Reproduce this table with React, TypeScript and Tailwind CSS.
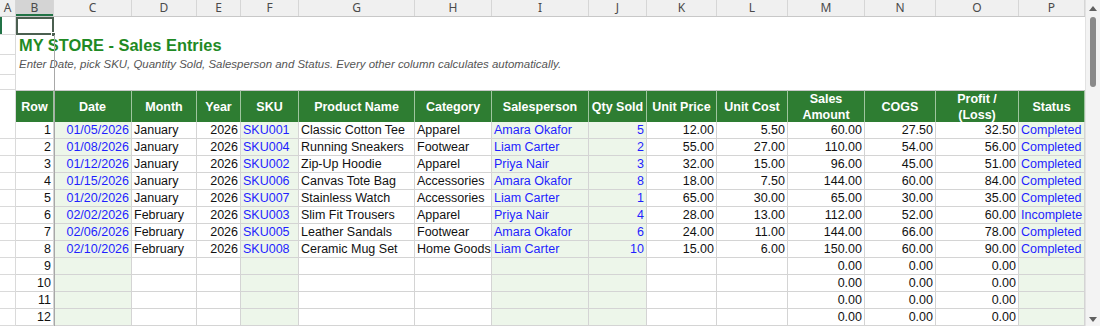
import React from "react";

type Col = { w: number; align: "left" | "right"; input?: boolean };

const COLS: Col[] = [
  { w: 38, align: "right" },
  { w: 78, align: "right", input: true },
  { w: 65, align: "left" },
  { w: 44, align: "right" },
  { w: 58, align: "left", input: true },
  { w: 116, align: "left" },
  { w: 77, align: "left" },
  { w: 97, align: "left", input: true },
  { w: 58, align: "right", input: true },
  { w: 70, align: "right" },
  { w: 71, align: "right" },
  { w: 77, align: "right" },
  { w: 71, align: "right" },
  { w: 83, align: "right" },
  { w: 66, align: "left", input: true },
];

const GRID =
  "grid grid-cols-[16px_38px_78px_65px_44px_58px_116px_77px_97px_58px_70px_71px_77px_71px_83px_66px]";

const LETTERS = ["A", "B", "C", "D", "E", "F", "G", "H", "I", "J", "K", "L", "M", "N", "O", "P"];

const HEADERS: React.ReactNode[] = [
  "Row",
  "Date",
  "Month",
  "Year",
  "SKU",
  "Product Name",
  "Category",
  "Salesperson",
  "Qty Sold",
  "Unit Price",
  "Unit Cost",
  <>
    Sales
    <br />
    Amount
  </>,
  "COGS",
  <>
    Profit /
    <br />
    (Loss)
  </>,
  "Status",
];

const DATA: string[][] = [
  ["1", "01/05/2026", "January", "2026", "SKU001", "Classic Cotton Tee", "Apparel", "Amara Okafor", "5", "12.00", "5.50", "60.00", "27.50", "32.50", "Completed"],
  ["2", "01/08/2026", "January", "2026", "SKU004", "Running Sneakers", "Footwear", "Liam Carter", "2", "55.00", "27.00", "110.00", "54.00", "56.00", "Completed"],
  ["3", "01/12/2026", "January", "2026", "SKU002", "Zip-Up Hoodie", "Apparel", "Priya Nair", "3", "32.00", "15.00", "96.00", "45.00", "51.00", "Completed"],
  ["4", "01/15/2026", "January", "2026", "SKU006", "Canvas Tote Bag", "Accessories", "Amara Okafor", "8", "18.00", "7.50", "144.00", "60.00", "84.00", "Completed"],
  ["5", "01/20/2026", "January", "2026", "SKU007", "Stainless Watch", "Accessories", "Liam Carter", "1", "65.00", "30.00", "65.00", "30.00", "35.00", "Completed"],
  ["6", "02/02/2026", "February", "2026", "SKU003", "Slim Fit Trousers", "Apparel", "Priya Nair", "4", "28.00", "13.00", "112.00", "52.00", "60.00", "Incomplete"],
  ["7", "02/06/2026", "February", "2026", "SKU005", "Leather Sandals", "Footwear", "Amara Okafor", "6", "24.00", "11.00", "144.00", "66.00", "78.00", "Completed"],
  ["8", "02/10/2026", "February", "2026", "SKU008", "Ceramic Mug Set", "Home Goods", "Liam Carter", "10", "15.00", "6.00", "150.00", "60.00", "90.00", "Completed"],
  ["9", "", "", "", "", "", "", "", "", "", "", "0.00", "0.00", "0.00", ""],
  ["10", "", "", "", "", "", "", "", "", "", "", "0.00", "0.00", "0.00", ""],
  ["11", "", "", "", "", "", "", "", "", "", "", "0.00", "0.00", "0.00", ""],
  ["12", "", "", "", "", "", "", "", "", "", "", "0.00", "0.00", "0.00", ""],
];

function ColA({ h, selected }: { h: string; selected?: boolean }) {
  return (
    <div className={`${h} border-b border-r border-[#dadada] bg-white flex`}>
      <div className={`w-[2px] h-full ${selected ? "bg-[#217346]" : "bg-transparent"}`} />
    </div>
  );
}

export default function App() {
  return (
    <div
      className="w-[1100px] h-[326px] overflow-hidden flex bg-white text-black"
      style={{ fontFamily: '"Liberation Sans", Arial, sans-serif' }}
    >
      <div className="relative w-[1085px] h-full flex flex-col">
        {/* column letters */}
        <div className={`${GRID} h-[17px] bg-[#f0f0f0] border-b border-[#c8c8c8]`}>
          {LETTERS.map((l) => (
            <div
              key={l}
              className={`flex items-center justify-center border-r border-[#d6d6d6] text-[12px] leading-none text-[#4a4a4a] ${
                l === "B" ? "bg-[#d4d4d4] shadow-[inset_0_-2px_0_#217346]" : ""
              }`}
              style={{ fontFamily: '"Noto Sans", "Open Sans", sans-serif' }}
            >
              {l}
            </div>
          ))}
        </div>

        {/* row 1 with selected cell */}
        <div className="flex h-[18px]">
          <ColA h="h-[18px] w-[16px]" selected />
          <div className="relative w-[38px] h-[18px] border-2 border-[#4b5f50]">
            <div className="absolute -right-[4px] -bottom-[4px] w-[5px] h-[5px] bg-[#4b5f50] border border-white" />
          </div>
          <div className="flex-1" />
        </div>

        {/* title */}
        <div className="flex h-[20px]">
          <ColA h="h-[20px] w-[16px]" />
          <div className="flex-1 flex items-center pl-[3px] pt-[1px] text-[16.4px] font-bold text-[#1f8a24] whitespace-nowrap">
            MY STORE - Sales Entries
          </div>
        </div>

        {/* subtitle */}
        <div className="flex h-[20px]">
          <ColA h="h-[20px] w-[16px]" />
          <div className="flex-1 flex items-center pl-[3px] text-[11.45px] italic text-[#555555] whitespace-nowrap">
            Enter Date, pick SKU, Quantity Sold, Salesperson and Status. Every other column calculates automatically.
          </div>
        </div>

        {/* blank */}
        <div className="flex h-[15px]">
          <ColA h="h-[15px] w-[16px]" />
          <div className="flex-1" />
        </div>

        {/* table header */}
        <div className={`${GRID} h-[32px]`}>
          <div className="border-b border-r border-[#dadada] bg-white" />
          {HEADERS.map((h, i) => (
            <div
              key={i}
              className="flex items-center justify-center text-center bg-[#2e7d32] text-white font-bold text-[12.5px] leading-[16px] border-r border-b border-[#9fc59f] border-t border-t-[#c9c9c9] whitespace-nowrap"
            >
              {h}
            </div>
          ))}
        </div>

        {/* data rows */}
        {DATA.map((row, r) => (
          <div key={r} className={`${GRID} h-[17px]`}>
            <div className="border-b border-r border-[#dadada] bg-white" />
            {row.map((v, c) => {
              const col = COLS[c];
              const blue = col.input && c !== 0;
              return (
                <div
                  key={c}
                  className={`overflow-hidden whitespace-nowrap text-[12.5px] leading-[17px] border-b border-r border-[#d4d4d4] px-[2px] ${
                    col.align === "right" ? "text-right" : "text-left"
                  } ${col.input ? "bg-[#edf6ea]" : "bg-white"} ${blue ? "text-[#1f1fff]" : "text-[#111111]"}`}
                >
                  {v}
                </div>
              );
            })}
          </div>
        ))}

        {/* freeze pane line */}
        <div className="absolute left-[54px] top-[35px] bottom-0 w-px bg-[#a8a8a8]" />
      </div>

      {/* scrollbar */}
      <div className="w-[15px] h-full bg-[#f3f3f3] border-l border-[#e2e2e2] flex flex-col items-center">
        <div className="h-[17px] flex items-center justify-center">
          <svg width="8" height="5" viewBox="0 0 8 5">
            <path d="M4 0 L8 5 L0 5 Z" fill="#606060" />
          </svg>
        </div>
        <div className="w-[6px] h-[70px] rounded-full bg-[#8a8a8a]" />
        <div className="flex-1" />
        <div className="h-[14px] flex items-center justify-center">
          <svg width="8" height="5" viewBox="0 0 8 5">
            <path d="M0 0 L8 0 L4 5 Z" fill="#606060" />
          </svg>
        </div>
      </div>
    </div>
  );
}
